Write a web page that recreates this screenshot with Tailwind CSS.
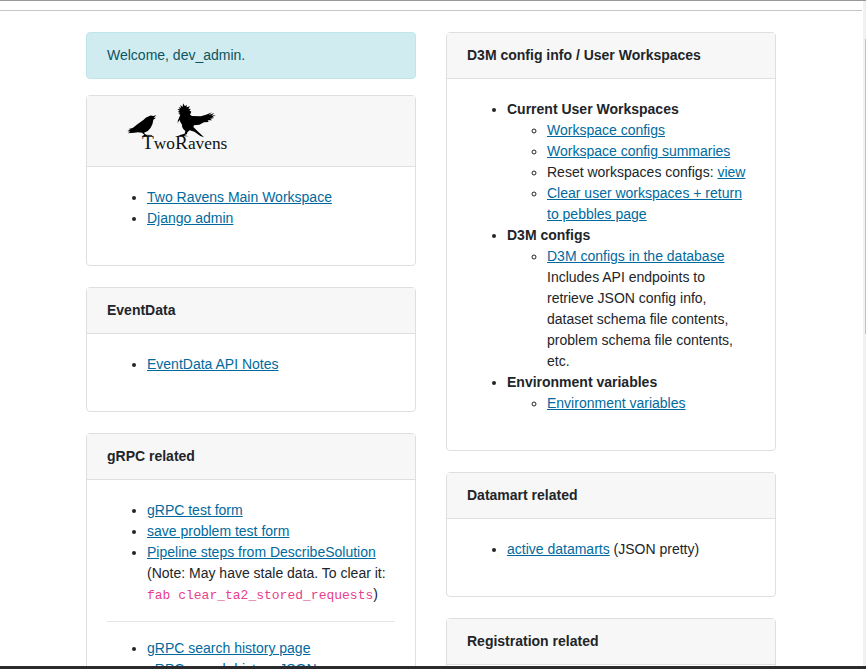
<!DOCTYPE html>
<html lang="en">
<head>
<meta charset="utf-8">
<meta name="viewport" content="width=device-width, initial-scale=1">
<title>TwoRavens developer links</title>
<script src="https://cdn.jsdelivr.net/npm/@tailwindcss/browser@4"></script>
</head>
<body class="flex h-screen flex-col overflow-hidden bg-white font-['Liberation_Sans',Arial,sans-serif] text-[14px] leading-[21px] text-[#212529]">
<div class="flex min-h-0 flex-1 border-t border-[#999]">
  <div class="min-w-0 flex-1 overflow-hidden">
    <header class="h-[10px] border-b border-[#c8c8c8]"></header>
    <main class="mx-auto grid max-w-[720px] grid-cols-2 items-start gap-[30px] px-[15px] pt-[21px]">
      <div>
        <div role="alert" class="mb-4 rounded border border-[#bee5eb] bg-[#d1ecf1] px-5 py-3 text-[#0c5460]">Welcome, dev_admin.</div>

        <section class="mb-[21px] rounded border border-[#dfdfdf]">
          <h2 class="border-b border-[#dfdfdf] bg-[#f7f7f7] px-5 py-1">
            <svg class="ml-3 block h-[62px] w-[120px]" viewBox="-3 6 360 186" role="img" aria-label="TwoRavens">
              <g fill="#000">
                <path d="M23 106 L31 101 L22 99 L31 95 L26 93 L38 90 Q54 77 70 66 Q78 57 87 55 Q92 50 99 54 L109 52 L101 59 L108 59 L100 65 Q99 78 92 89 Q86 99 75 103 L72 105 L78 110 L96 111 L97 113 L80 113 L88 118 L76 114 L64 116 L73 110 L66 104 Q54 101 43 104 Z"/>
                <path d="M181 72 L179 66 Q173 71 174 78 Q171 68 177 60 L181 50 L175 47 L180 45 L173 41 L179 39 L172 33 L180 34 L176 27 L183 30 L181 21 L188 27 L189 16 L195 25 L200 20 L200 28 L210 25 L205 32 L213 33 L208 37 L214 41 L210 50 L216 54 L242 55 L258 50 L276 43 L266 51 L283 45 L274 53 L287 51 L276 58 L283 60 L270 62 L277 67 L263 67 L266 72 L252 73 L238 80 L222 82 L220 87 L233 100 L252 118 L241 114 L223 101 L209 97 L202 103 L201 108 L193 112 L206 115 L191 115 L194 122 L186 115 L172 115 L183 110 L194 107 L196 99 Q185 90 186 80 Z"/>
              </g>
              <text x="66" y="153" font-family="Liberation Serif, serif" font-size="52" fill="#111"><tspan font-size="58">T</tspan>wo<tspan font-size="58">R</tspan>avens</text>
            </svg>
          </h2>
          <div class="p-5">
            <ul class="mb-4 list-disc pl-10">
              <li><a href="#" class="text-[#006a9e] underline">Two Ravens Main Workspace</a></li>
              <li><a href="#" class="text-[#006a9e] underline">Django admin</a></li>
            </ul>
          </div>
        </section>

        <section class="mb-[21px] rounded border border-[#dfdfdf]">
          <h2 class="border-b border-[#dfdfdf] bg-[#f7f7f7] px-5 py-3 font-bold">EventData</h2>
          <div class="p-5">
            <ul class="mb-4 list-disc pl-10">
              <li><a href="#" class="text-[#006a9e] underline">EventData API Notes</a></li>
            </ul>
          </div>
        </section>

        <section class="mb-[21px] rounded border border-[#dfdfdf]">
          <h2 class="border-b border-[#dfdfdf] bg-[#f7f7f7] px-5 py-3 font-bold">gRPC related</h2>
          <div class="p-5">
            <ul class="mb-4 list-disc pl-10">
              <li><a href="#" class="text-[#006a9e] underline">gRPC test form</a></li>
              <li><a href="#" class="text-[#006a9e] underline">save problem test form</a></li>
              <li><a href="#" class="text-[#006a9e] underline">Pipeline steps from DescribeSolution</a><br>(Note: May have stale data. To clear it: <code class="font-['Liberation_Mono',monospace] text-[13px] leading-none text-[#e83e8c]">fab clear_ta2_stored_requests</code>)</li>
            </ul>
            <hr class="mb-4 border-[#e5e5e5]">
            <ul class="mb-4 list-disc pl-10">
              <li><a href="#" class="text-[#006a9e] underline">gRPC search history page</a></li>
              <li><a href="#" class="text-[#006a9e] underline">gRPC search history JSON</a></li>
            </ul>
          </div>
        </section>
      </div>

      <div>
        <section class="mb-[21px] rounded border border-[#dfdfdf]">
          <h2 class="border-b border-[#dfdfdf] bg-[#f7f7f7] px-5 py-3 font-bold">D3M config info / User Workspaces</h2>
          <div class="p-5">
            <ul class="mb-4 list-disc pl-10">
              <li><b>Current User Workspaces</b>
                <ul class="list-[circle] pl-10">
                  <li><a href="#" class="text-[#006a9e] underline">Workspace configs</a></li>
                  <li><a href="#" class="text-[#006a9e] underline">Workspace config summaries</a></li>
                  <li>Reset workspaces configs: <a href="#" class="text-[#006a9e] underline">view</a></li>
                  <li><a href="#" class="text-[#006a9e] underline">Clear user workspaces + return to pebbles page</a></li>
                </ul>
              </li>
              <li><b>D3M configs</b>
                <ul class="list-[circle] pl-10">
                  <li><a href="#" class="text-[#006a9e] underline">D3M configs in the database</a><br>Includes API endpoints to retrieve JSON config info, dataset schema file contents, problem schema file contents, etc.</li>
                </ul>
              </li>
              <li><b>Environment variables</b>
                <ul class="list-[circle] pl-10">
                  <li><a href="#" class="text-[#006a9e] underline">Environment variables</a></li>
                </ul>
              </li>
            </ul>
          </div>
        </section>

        <section class="mb-[21px] rounded border border-[#dfdfdf]">
          <h2 class="border-b border-[#dfdfdf] bg-[#f7f7f7] px-5 py-3 font-bold">Datamart related</h2>
          <div class="p-5">
            <ul class="mb-4 list-disc pl-10">
              <li><a href="#" class="text-[#006a9e] underline">active datamarts</a> (JSON pretty)</li>
            </ul>
          </div>
        </section>

        <section class="mb-[21px] rounded border border-[#dfdfdf]">
          <h2 class="border-b border-[#dfdfdf] bg-[#f7f7f7] px-5 py-3 font-bold">Registration related</h2>
          <div class="p-5"></div>
        </section>
      </div>
    </main>
  </div>
  <div class="w-1 border-l border-white bg-[#f1f1f1] pt-[38px] pl-[2px]" aria-hidden="true">
    <div class="h-[47%] bg-[#c1c1c1]"></div>
  </div>
</div>
<footer class="h-[3px] shrink-0 bg-[#2b2b2d]"></footer>
</body>
</html>
